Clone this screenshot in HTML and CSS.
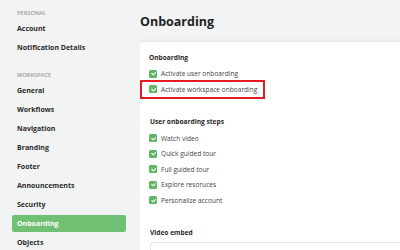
FILE: index.html
```html
<!DOCTYPE html>
<html lang="en">
<head>
  <meta charset="UTF-8" />
  <meta name="viewport" content="width=device-width, initial-scale=1.0" />
  <title>Settings - Onboarding</title>
  <link rel="stylesheet" href="styles.css">
</head>
<body>
  <div class="layout">
    <nav class="sidebar">
      <div class="nav-group">
        <div class="nav-heading">Personal</div>
        <a class="nav-item">Account</a>
        <a class="nav-item">Notification Details</a>
      </div>
      <div class="nav-group">
        <div class="nav-heading">Workspace</div>
        <a class="nav-item">General</a>
        <a class="nav-item">Workflows</a>
        <a class="nav-item">Navigation</a>
        <a class="nav-item">Branding</a>
        <a class="nav-item">Footer</a>
        <a class="nav-item">Announcements</a>
        <a class="nav-item">Security</a>
        <a class="nav-item active">Onboarding</a>
        <a class="nav-item">Objects</a>
      </div>
    </nav>

    <main class="content">
      <h1>Onboarding</h1>
      <div class="card">
        <h3>Onboarding</h3>
        <label class="check"><span class="box"></span>Activate user onboarding</label>
        <label class="check marked"><span class="box"></span>Activate workspace onboarding</label>

        <h3 class="steps-title">User onboarding steps</h3>
        <label class="check"><span class="box"></span>Watch video</label>
        <label class="check"><span class="box"></span>Quick guided tour</label>
        <label class="check"><span class="box"></span>Full guided tour</label>
        <label class="check"><span class="box"></span>Explore resoruces</label>
        <label class="check"><span class="box"></span>Personalize account</label>

        <h3 class="embed-title">Video embed</h3>
        <div class="embed-input"></div>
      </div>
    </main>
  </div>
</body>
</html>
```

FILE: styles.css
```css
body { margin: 0; font-family: 'Open Sans', sans-serif; background: #f2f3f3; color: #333; overflow: hidden; }
.layout { display: grid; grid-template-columns: 140px 1fr; height: 250px; overflow: hidden; }

.sidebar { padding-top: 8px; }
.nav-group { display: flex; flex-direction: column; gap: 2px; }
.nav-group + .nav-group { margin-top: 14px; }
.nav-heading { padding-left: 17px; height: 10px; line-height: 10px; font-size: 5.7px; font-weight: 600; color: #9a9c9c; text-transform: uppercase; }
.nav-item { display: block; height: 17px; line-height: 17px; margin: 0 14px 0 12px; padding-left: 5px; border-radius: 2px; font-size: 7px; font-weight: 700; color: #2c2c2c; cursor: pointer; }
.nav-item.active { background: #70c073; color: #fff; }

.content { padding-top: 11px; overflow: hidden; }
h1 { margin: 0 0 9px; height: 22px; line-height: 22px; font-size: 12.5px; font-weight: 700; color: #1f1f1f; }
.card { background: #fff; border-radius: 3px 0 0 0; padding: 11px 0 0 9px; height: 197px; overflow: hidden; box-shadow: 0 0 5px rgba(0, 0, 0, 0.12); }
h3 { margin: 0 0 3px; height: 10px; line-height: 10px; font-size: 6.6px; font-weight: 700; color: #2a2a2a; }
.steps-title { margin: 19.5px 0 4px 1px; }
.embed-title { margin: 20px 0 4px 1px; }

.check { display: flex; align-items: center; width: fit-content; height: 15.5px; font-size: 6.6px; color: #444; }
.box { position: relative; width: 8px; height: 8px; margin-right: 4px; border-radius: 1.5px; background: #62b766; }
.box::after { content: ""; position: absolute; left: 2.6px; top: 1.6px; width: 2px; height: 3.4px; border: solid #fff; border-width: 0 1px 1px 0; transform: rotate(45deg); }
.check.marked { margin-left: -7px; padding: 0 6px 0 7px; height: 15.5px; outline: 2px solid #e41b23; }

.embed-input { margin-left: 1px; height: 30px; border: 1px solid #e3e4e4; border-right: none; border-radius: 3px 0 0 3px; }
```
